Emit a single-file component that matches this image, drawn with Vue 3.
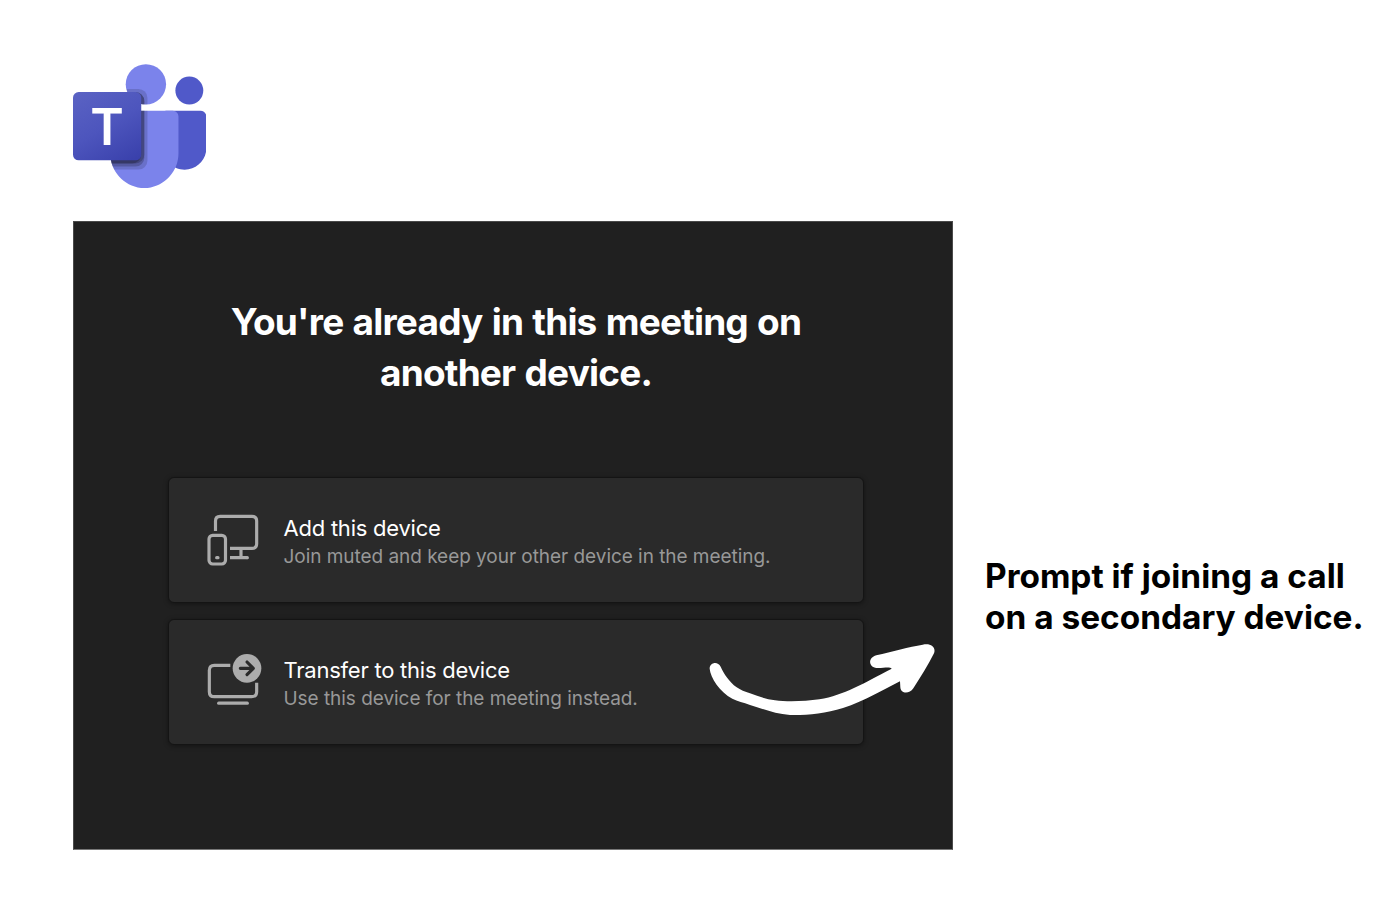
<template>
  <div class="page">
    <svg class="logo" viewBox="0 0 2228.833 2073.333">
      <defs>
        <linearGradient id="tile" gradientUnits="userSpaceOnUse" x1="198" y1="392" x2="942" y2="1681">
          <stop offset="0" stop-color="#5a62c3" />
          <stop offset=".5" stop-color="#4d55bd" />
          <stop offset="1" stop-color="#3940ab" />
        </linearGradient>
        <clipPath id="person">
          <circle cx="1218" cy="337" r="337" />
          <path :d="bodyPath" />
        </clipPath>
      </defs>
      <path
        fill="#5059c9"
        d="M1554.6 777.5h575.7c54.4 0 98.5 44.1 98.5 98.5v524.4c0 199.9-162 362-362 362h-1.7c-199.9 0-362-162-362-362V829c0-28.5 23-51.5 51.5-51.5z"
      />
      <circle cx="1943.75" cy="440.6" r="233.25" fill="#5059c9" />
      <circle cx="1218" cy="337" r="337" fill="#7b83eb" />
      <path :d="bodyPath" fill="#7b83eb" />
      <g clip-path="url(#person)">
        <rect x="0" y="414" width="1244" height="1348" rx="148" opacity=".14" />
        <rect x="0" y="466" width="1192" height="1244" rx="148" opacity=".2" />
        <rect x="0" y="466" width="1192" height="1192" rx="148" opacity=".2" />
        <rect x="0" y="466" width="1140" height="1192" rx="148" opacity=".2" />
      </g>
      <rect y="466.5" width="1140.3" height="1140.3" rx="95" fill="url(#tile)" />
      <text class="logo-letter" x="570" y="1345" text-anchor="middle">T</text>
    </svg>

    <div class="content">
      <section class="prompt">
        <h1 class="heading">You're already in this meeting on<br />another device.</h1>

        <div class="options">
          <button v-for="option in options" :key="option.id" class="option" type="button">
            <svg v-if="option.id === 'add'" class="icon" viewBox="30 33 174 174">
              <path d="M61.5 93V63q0-14 14-14H171q14 0 14 14V131q0 14-14 14H105" />
              <path d="M138 145V173M105 173H157" />
              <path d="M157 173h.1M65 173h4" stroke-linecap="round" />
              <rect x="42" y="106" width="49.5" height="86" rx="11" />
            </svg>
            <svg v-else class="icon" viewBox="30 39 174 174">
              <path d="M106 76H58q-15 0-15 15V155q0 15 15 15H170q15 0 15-15V128" />
              <path d="M71 189.5H157" stroke-linecap="round" />
              <circle class="badge" cx="156" cy="85" r="43" />
              <path class="badge-arrow" d="M136 85H174M156 66l19 19-19 19" />
            </svg>
            <span class="option-text">
              <span class="option-title">{{ option.title }}</span>
              <span class="option-desc">{{ option.desc }}</span>
            </span>
          </button>
        </div>

        <svg class="pointer" viewBox="0 0 780 300">
          <path
            d="M44 116C43 98 68 91 77 110C88 134 102 154 125 172C136 180 150 185 165 190C190 199 213 207 240 211C278 216 331 214 373 208C449 194 502 162 590 116C584 109 564 115 545 114C520 112 518 83 544 76C591 64 643 51 683 44C706 38 724 51 717 70C700 105 676 142 655 175C642 194 617 191 616 172L615 154C561 181 510 213 444 234C390 251 335 256 285 255C240 252 205 237 165 225C145 217 128 214 112 206C75 186 46 143 44 116Z"
          />
        </svg>
      </section>

      <p class="note">Prompt if joining a call<br />on a secondary device.</p>
    </div>
  </div>
</template>

<script setup>
const bodyPath =
  'M1667.3 777.5H717c-53.7 1.3-96.2 45.9-95 99.7v598.1c-7.5 322.5 247.7 590.1 570.2 598c322.5-7.9 577.6-275.5 570.1-598V877.2c1.3-53.8-41.2-98.4-95-99.7z';

const options = [
  {
    id: 'add',
    title: 'Add this device',
    desc: 'Join muted and keep your other device in the meeting.'
  },
  {
    id: 'transfer',
    title: 'Transfer to this device',
    desc: 'Use this device for the meeting instead.'
  }
];
</script>

<style>
body {
  margin: 0;
  background: #fff;
}
</style>

<style scoped>
.page {
  box-sizing: border-box;
  width: 1398px;
  height: 918px;
  padding: 64px 0 0 73px;
  overflow: hidden;
  font-family: Inter, "Liberation Sans", sans-serif;
}

.logo {
  display: block;
  width: 133.4px;
  height: 124.4px;
}

.logo-letter {
  fill: #fff;
  font-size: 850px;
  font-weight: 600;
}

.content {
  display: flex;
  align-items: flex-start;
  margin-top: 32.6px;
}

.prompt {
  position: relative;
  box-sizing: border-box;
  flex: none;
  width: 880px;
  height: 629px;
  padding: 74px 88px 0 94px;
  border: 1px solid #4a4a4a;
  border-bottom-color: #777;
  background: #202020;
}

.heading {
  margin: 0;
  color: #fff;
  font-size: 37px;
  font-weight: 700;
  line-height: 51px;
  letter-spacing: -0.8px;
  word-spacing: 1.2px;
  text-align: center;
  white-space: nowrap;
}

.options {
  display: flex;
  flex-direction: column;
  gap: 16px;
  margin-top: 79px;
}

.option {
  display: flex;
  align-items: center;
  gap: 20.5px;
  box-sizing: border-box;
  height: 126px;
  padding: 0 36px;
  border: 1px solid #141414;
  border-radius: 6px;
  background: #2a2a2a;
  box-shadow: 0 1px 5px rgba(0, 0, 0, 0.4);
  font-family: inherit;
  text-align: left;
}

.icon {
  flex: none;
  width: 58px;
  height: 58px;
  fill: none;
  stroke: #acacac;
  stroke-width: 9.5;
}

.icon .badge {
  fill: #acacac;
  stroke: none;
}

.icon .badge-arrow {
  stroke: #2a2a2a;
  stroke-linecap: round;
  stroke-linejoin: round;
}

.option-text {
  display: flex;
  flex-direction: column;
  padding-top: 7px;
  white-space: nowrap;
}

.option-title {
  color: #fff;
  font-size: 22px;
  line-height: 27px;
  letter-spacing: -0.23px;
}

.option-desc {
  color: #989898;
  font-size: 19px;
  line-height: 30px;
  letter-spacing: -0.04px;
}

.pointer {
  position: absolute;
  top: 408px;
  left: 621px;
  width: 260px;
  height: 100px;
  fill: #fff;
}

.note {
  margin: 335px 0 0 32px;
  color: #000;
  font-size: 33.4px;
  font-weight: 700;
  line-height: 41px;
  white-space: nowrap;
}
</style>
